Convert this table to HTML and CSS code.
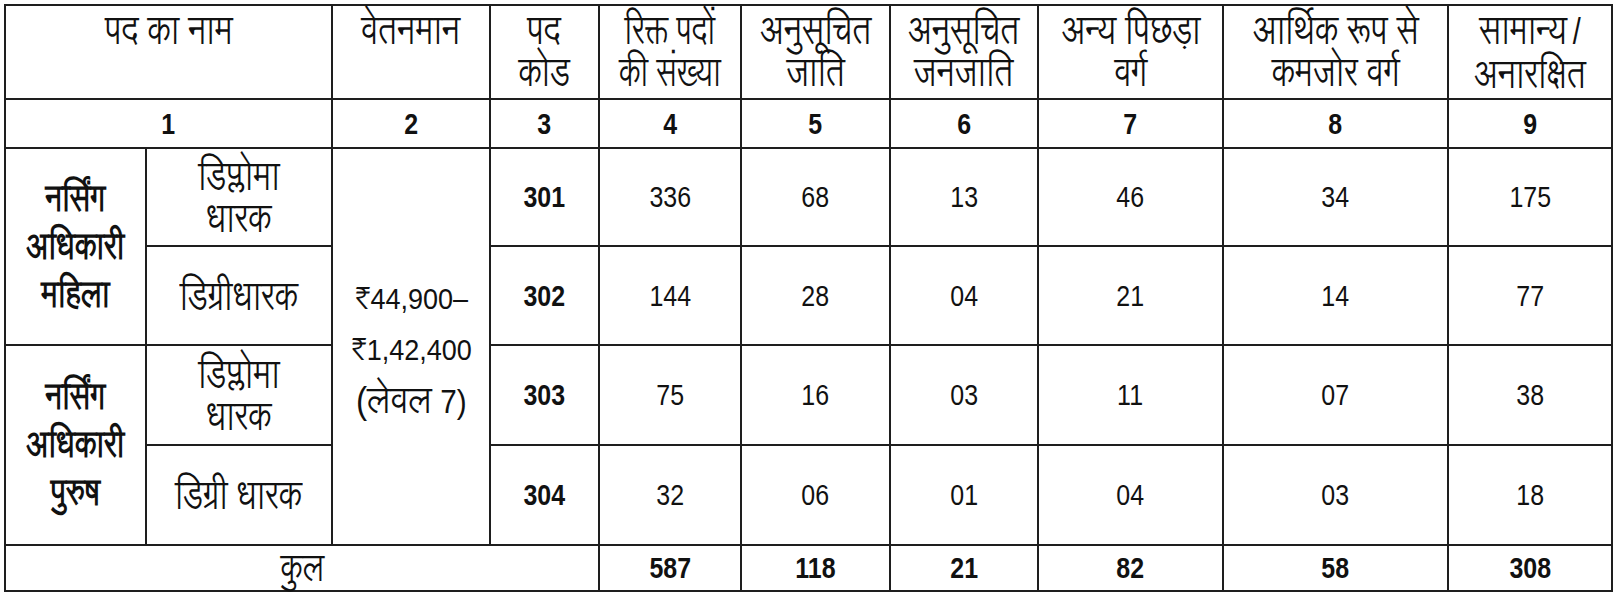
FILE: index.html
```html
<!DOCTYPE html>
<html lang="hi">
<head>
<meta charset="utf-8">
<title>पद विवरण</title>
<link rel="stylesheet" href="styles.css">
</head>
<body>
<table class="grid">
  <colgroup>
    <col class="c1"><col class="c1b"><col class="c2"><col class="c3"><col class="c4">
    <col class="c5"><col class="c6"><col class="c7"><col class="c8"><col class="c9">
  </colgroup>
  <tr class="r-head">
    <th colspan="2"><span class="t">पद का नाम</span></th>
    <th><span class="t">वेतनमान</span></th>
    <th><span class="t">पद<br>कोड</span></th>
    <th class="sm"><span class="t">रिक्त पदों<br>की संख्या</span></th>
    <th><span class="t">अनुसूचित<br>जाति</span></th>
    <th><span class="t">अनुसूचित<br>जनजाति</span></th>
    <th><span class="t">अन्य पिछड़ा<br>वर्ग</span></th>
    <th><span class="t">आर्थिक रूप से<br>कमजोर वर्ग</span></th>
    <th><span class="t">सामान्य<span class="sl">/</span><br>अनारक्षित</span></th>
  </tr>
  <tr class="r-num">
    <td colspan="2"><span class="n">1</span></td>
    <td><span class="n">2</span></td>
    <td><span class="n">3</span></td>
    <td><span class="n">4</span></td>
    <td><span class="n">5</span></td>
    <td><span class="n">6</span></td>
    <td><span class="n">7</span></td>
    <td><span class="n">8</span></td>
    <td><span class="n">9</span></td>
  </tr>
  <tr class="r-data r1">
    <td rowspan="2" class="name"><span class="t">नर्सिंग<br>अधिकारी<br>महिला</span></td>
    <td class="sub"><span class="t">डिप्लोमा<br>धारक</span></td>
    <td rowspan="4" class="pay"><span class="p">₹44,900–<br>₹1,42,400<br><span class="lv"><span class="dv">(लेवल</span> 7)</span></span></td>
    <td class="code"><span class="n">301</span></td>
    <td><span class="n">336</span></td>
    <td><span class="n">68</span></td>
    <td><span class="n">13</span></td>
    <td><span class="n">46</span></td>
    <td><span class="n">34</span></td>
    <td><span class="n">175</span></td>
  </tr>
  <tr class="r-data r2">
    <td class="sub"><span class="t">डिग्रीधारक</span></td>
    <td class="code"><span class="n">302</span></td>
    <td><span class="n">144</span></td>
    <td><span class="n">28</span></td>
    <td><span class="n">04</span></td>
    <td><span class="n">21</span></td>
    <td><span class="n">14</span></td>
    <td><span class="n">77</span></td>
  </tr>
  <tr class="r-data r3">
    <td rowspan="2" class="name"><span class="t">नर्सिंग<br>अधिकारी<br>पुरुष</span></td>
    <td class="sub"><span class="t">डिप्लोमा<br>धारक</span></td>
    <td class="code"><span class="n">303</span></td>
    <td><span class="n">75</span></td>
    <td><span class="n">16</span></td>
    <td><span class="n">03</span></td>
    <td><span class="n">11</span></td>
    <td><span class="n">07</span></td>
    <td><span class="n">38</span></td>
  </tr>
  <tr class="r-data r4">
    <td class="sub"><span class="t">डिग्री धारक</span></td>
    <td class="code"><span class="n">304</span></td>
    <td><span class="n">32</span></td>
    <td><span class="n">06</span></td>
    <td><span class="n">01</span></td>
    <td><span class="n">04</span></td>
    <td><span class="n">03</span></td>
    <td><span class="n">18</span></td>
  </tr>
  <tr class="r-total">
    <td colspan="4" class="kul"><span class="t">कुल</span></td>
    <td><span class="n">587</span></td>
    <td><span class="n">118</span></td>
    <td><span class="n">21</span></td>
    <td><span class="n">82</span></td>
    <td><span class="n">58</span></td>
    <td><span class="n">308</span></td>
  </tr>
</table>
</body>
</html>
```
FILE: styles.css
```css
html, body {
  margin: 0;
  padding: 0;
  background: #ffffff;
}
body {
  padding: 4px 0 0 4px;
  font-family: "Liberation Sans", "Lohit Devanagari", sans-serif;
  color: #111111;
}
.grid {
  border-collapse: collapse;
  table-layout: fixed;
  width: 1609px;
}
.grid th, .grid td {
  border: 2px solid #1e1e1e;
  padding: 0;
  text-align: center;
  vertical-align: middle;
  font-weight: normal;
  font-size: 29px;
  line-height: 42px;
}
.c1 { width: 141px; }
.c1b { width: 186px; }
.c2 { width: 158px; }
.c3 { width: 109px; }
.c4 { width: 142px; }
.c5 { width: 149px; }
.c6 { width: 148px; }
.c7 { width: 185px; }
.c8 { width: 225px; }
.c9 { width: 164px; }

.t, .n, .p {
  display: inline-block;
  white-space: nowrap;
}
.t { transform: scaleX(0.8); }
.n { transform: scaleX(0.86); }
.p { transform: scaleX(0.9); }

.r-head { height: 94px; }
.r-head th {
  vertical-align: top;
  padding-top: 3px;
  font-size: 40px;
}
.r-head th.sm .t { transform: scaleX(0.74); }
.sl { font-size: 36px; margin-left: 7px; }

.r-num { height: 49px; }
.r-num td { font-weight: bold; font-size: 29px; }

.r1 { height: 98px; }
.r2 { height: 99px; }
.r3 { height: 100px; }
.r4 { height: 100px; }

.grid td.name {
  font-size: 37px;
  font-weight: bold;
  line-height: 48px;
}
.grid td.sub { font-size: 40px; }
.grid td.pay {
  font-size: 30px;
  line-height: 51px;
  padding-top: 8px;
}
.lv { font-size: 33px; }
.dv { font-size: 37px; }
.grid td.code { font-weight: bold; }

.r-total { height: 46px; }
.r-total td { font-weight: bold; }
.grid td.kul { font-weight: normal; font-size: 38px; }
```
